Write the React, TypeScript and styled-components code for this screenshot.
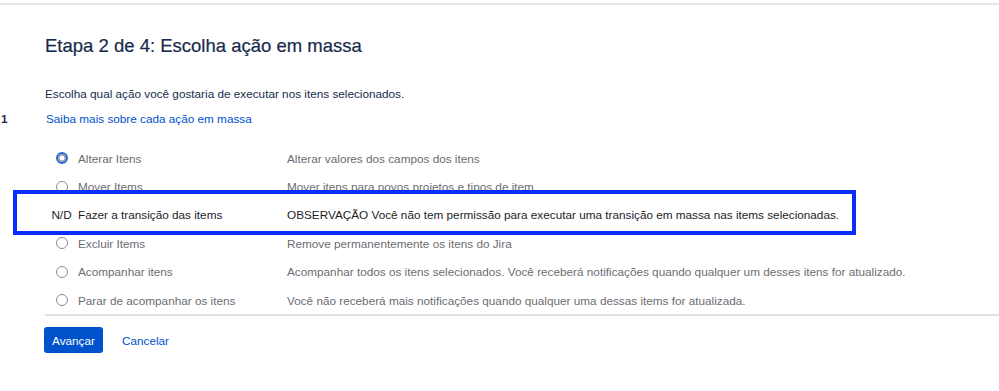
import React from "react";
import styled, { createGlobalStyle } from "styled-components";

const GlobalStyle = createGlobalStyle`
  html, body {
    margin: 0;
    padding: 0;
    background: #ffffff;
  }
  body {
    font-family: "Liberation Sans", Arial, sans-serif;
    color: #172b4d;
    -webkit-font-smoothing: antialiased;
  }
`;

const Page = styled.div`
  width: 999px;
  height: 391px;
  overflow: hidden;
  background: #fff;
`;

const TopBar = styled.div`
  height: 3px;
  border-bottom: 2px solid #e5e6eb;
`;

const Content = styled.div`
  padding: 29px 0 0 45px;
`;

const Title = styled.h2`
  margin: 0;
  font-size: 18.5px;
  line-height: 24px;
  font-weight: 400;
  color: #172b4d;
  -webkit-text-stroke: 0.2px #172b4d;
`;

const Intro = styled.p`
  margin: 26px 0 0;
  font-size: 11.75px;
  line-height: 20px;
  color: #172b4d;
`;

const LinkRow = styled.div`
  display: flex;
  align-items: center;
  margin: 5px 0 0 -45px;
  font-size: 11.75px;
  line-height: 20px;
`;

const Gutter = styled.span`
  width: 45px;
  padding-left: 1px;
  font-weight: 700;
  color: #172b4d;
`;

const Link = styled.a`
  color: #0052cc;
  text-decoration: none;
`;

const Table = styled.div`
  margin-top: 15px;
  border-bottom: 2px solid #e1e2e7;
`;

const Row = styled.div<{ $active?: boolean }>`
  position: relative;
  display: grid;
  grid-template-columns: 33px 209px 1fr;
  align-items: center;
  height: 28.4px;
  font-size: 11.75px;
  color: ${(p) => (p.$active ? "#1d1d1f" : "#6b6d73")};
`;

const Cell = styled.div`
  white-space: nowrap;
`;

const RadioCell = styled.div`
  display: flex;
  justify-content: center;
  align-items: center;
  color: #1d1d1f;
`;

const Radio = styled.span<{ $focused?: boolean }>`
  box-sizing: border-box;
  width: 12px;
  height: 12px;
  border-radius: 50%;
  background: #fff;
  border: ${(p) => (p.$focused ? "2px solid #2a6ad8" : "1px solid #8a8b90")};
  box-shadow: ${(p) => (p.$focused ? "inset 0 0 0 1.5px #8e95a3" : "none")};
`;

const Highlight = styled.div`
  position: absolute;
  left: -32px;
  top: -11px;
  width: 843px;
  height: 45px;
  box-sizing: border-box;
  border: 4.5px solid #0a2dff;
  pointer-events: none;
`;

const Actions = styled.div`
  display: flex;
  align-items: center;
  gap: 19px;
  margin: 11px 0 0 -1px;
`;

const PrimaryButton = styled.button`
  height: 26px;
  width: 59px;
  padding: 0;
  border: none;
  border-radius: 3px;
  background: #0052cc;
  color: #fff;
  font-family: inherit;
  font-size: 11.75px;
`;

const LinkButton = styled.button`
  border: none;
  background: none;
  padding: 0;
  color: #0052cc;
  font-family: inherit;
  font-size: 11.75px;
`;

type Action = {
  label: string;
  description: string;
  focused?: boolean;
  unavailable?: boolean;
};

const actions: Action[] = [
  { label: "Alterar Itens", description: "Alterar valores dos campos dos itens", focused: true },
  { label: "Mover Items", description: "Mover itens para novos projetos e tipos de item" },
  {
    label: "Fazer a transição das items",
    description:
      "OBSERVAÇÃO Você não tem permissão para executar uma transição em massa nas items selecionadas.",
    unavailable: true,
  },
  { label: "Excluir Items", description: "Remove permanentemente os itens do Jira" },
  {
    label: "Acompanhar itens",
    description:
      "Acompanhar todos os itens selecionados. Você receberá notificações quando qualquer um desses itens for atualizado.",
  },
  {
    label: "Parar de acompanhar os itens",
    description: "Você não receberá mais notificações quando qualquer uma dessas items for atualizada.",
  },
];

export default function App() {
  return (
    <Page>
      <GlobalStyle />
      <TopBar />
      <Content>
        <Title>Etapa 2 de 4: Escolha ação em massa</Title>
        <Intro>Escolha qual ação você gostaria de executar nos itens selecionados.</Intro>
        <LinkRow>
          <Gutter>1</Gutter>
          <Link href="#">Saiba mais sobre cada ação em massa</Link>
        </LinkRow>
        <Table>
          {actions.map((a) => (
            <Row key={a.label} $active={a.unavailable}>
              <RadioCell>{a.unavailable ? "N/D" : <Radio $focused={a.focused} />}</RadioCell>
              <Cell>{a.label}</Cell>
              <Cell>{a.description}</Cell>
              {a.unavailable && <Highlight />}
            </Row>
          ))}
        </Table>
        <Actions>
          <PrimaryButton>Avançar</PrimaryButton>
          <LinkButton>Cancelar</LinkButton>
        </Actions>
      </Content>
    </Page>
  );
}
